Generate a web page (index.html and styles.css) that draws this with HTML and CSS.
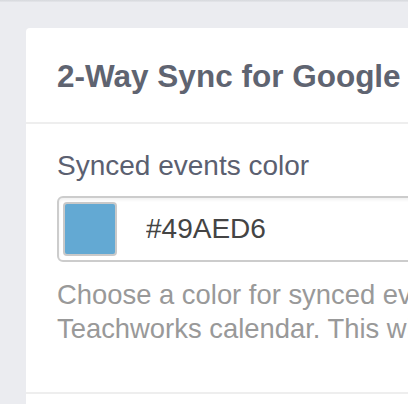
FILE: index.html
```html
<!DOCTYPE html>
<html lang="en">
<head>
  <meta charset="UTF-8">
  <meta name="viewport" content="width=device-width, initial-scale=1.0">
  <title>2-Way Sync for Google Calendar</title>
  <link rel="stylesheet" href="styles.css">
</head>
<body>
  <div class="topbar"></div>

  <section class="card">
    <header class="card-header">
      <h2>2-Way Sync for Google Calendar</h2>
    </header>

    <div class="card-body">
      <label class="field-label" for="syncColor">Synced events color</label>
      <div class="color-input">
        <span class="swatch"></span>
        <input id="syncColor" type="text" value="#49AED6">
      </div>
      <p class="help">Choose a color for synced events in your Teachworks calendar. This will apply to all events.</p>
    </div>

    <div class="card-footer"></div>
  </section>
</body>
</html>
```

FILE: styles.css
```css
:root {
  --page-bg: #ebecf0;
  --title-color: #5f6471;
  --label-color: #5b6070;
  --line: #eeeeee;
}
* { box-sizing: border-box; margin: 0; padding: 0; }
html, body {
  font-family: "Liberation Sans", Arial, sans-serif;
  background: var(--page-bg);
  overflow: hidden;
}
/* thin shadow under the app bar */
.topbar {
  height: 2px;
  background: linear-gradient(#d6d8dc, #e5e6ea);
}
/* Card */
.card {
  margin: 26px 0 0 26px;
  width: 760px;
  background: #fff;
  border-radius: 4px 4px 0 0;
}
.card-header {
  padding: 30px 30px 28px 31px;
  border-bottom: 2px solid var(--line);
}
.card-header h2 {
  font-size: 31.5px; line-height: 36px;
  font-weight: bold; color: var(--title-color);
  white-space: nowrap;
}
.card-body {
  padding: 26px 31px 46px;
}
.field-label {
  display: block;
  font-size: 28px; line-height: 32px;
  color: var(--label-color);
  margin-bottom: 14px;
}
.color-input {
  display: flex; align-items: center;
  width: 600px; padding: 4px;
  border: 2px solid #cccccc; border-radius: 6px;
  box-shadow: inset 0 2px 3px rgba(0,0,0,0.06);
}
.swatch {
  width: 54px; height: 54px; flex: none;
  background: #63a9d3;
  border: 2px solid #c9c9c9; border-radius: 4px;
}
.color-input input {
  border: none; outline: none; background: transparent;
  font-family: inherit; font-size: 28px;
  color: #444;
  margin-left: 29px;
}
.help {
  max-width: 625px;
  margin-top: 16px;
  font-size: 27.4px; line-height: 34px;
  color: #999;
}
.card-footer {
  border-top: 2px solid var(--line);
  height: 40px;
}
```
